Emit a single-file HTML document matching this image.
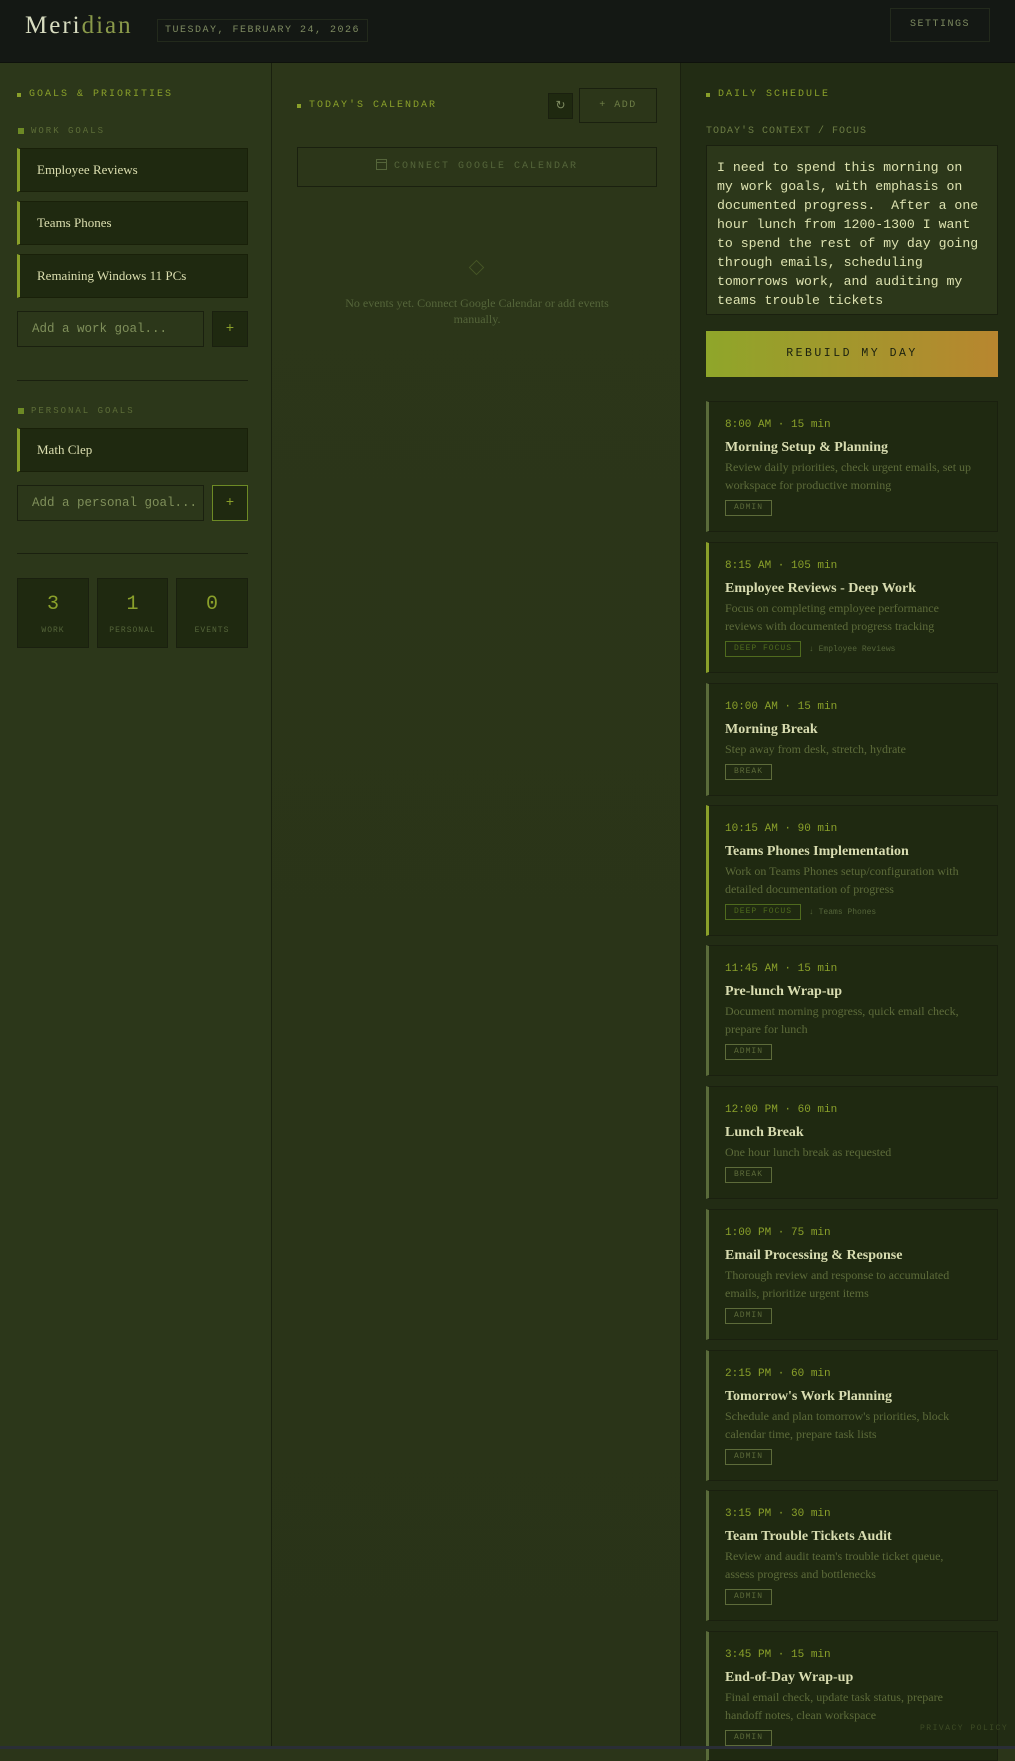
<!DOCTYPE html>
<html><head><meta charset="utf-8"><style>
*{box-sizing:border-box;margin:0;padding:0}
body{width:1015px;height:1749px;overflow:hidden;background:#2b3519;font-family:"Liberation Mono",monospace;position:relative}
.hdr{position:absolute;left:0;top:0;width:1015px;height:63px;background:#141814;border-bottom:1px solid #0e110c}
.logo{position:absolute;left:25px;top:12px;font:300 25px "Liberation Serif",serif;color:#d8dcc0;letter-spacing:2px}
.logo span{color:#8a9a4a}
.date{position:absolute;left:157px;top:19px;width:211px;height:23px;border:1px solid #232a1c;color:#7d8a60;font-size:10px;letter-spacing:1.5px;line-height:21px;text-align:center}
.set{position:absolute;left:890px;top:8px;width:100px;height:34px;border:1px solid #232a1c;color:#7d8a60;font-size:10px;letter-spacing:1.5px;line-height:32px;text-align:center}
.col{position:absolute;top:63px;bottom:0}
.c1{left:0;width:272px;background:#2c371a;border-right:1px solid #1a200f}
.c2{left:272px;width:409px;background:linear-gradient(#2c3619,#293318);border-right:1px solid #1a200f}
.c3{left:681px;width:334px;background:#222c14}
.lab{position:absolute;font-size:10px;letter-spacing:2px;color:#8aa02a;line-height:12px}
.lab:before{content:"";position:absolute;left:-12px;top:4px;width:4px;height:4px;background:#8aa02a}
.sub{position:absolute;font-size:9px;letter-spacing:2px;color:#5d6d38;line-height:10px}
.sub:before{content:"";position:absolute;left:-13px;top:2px;width:6px;height:6px;background:#6d8a25}
.goal{position:absolute;left:17px;width:231px;height:44px;background:#1f2910;border:1px solid #192009;border-left:3px solid #8aa02a;font:13px "Liberation Serif",serif;color:#dcdfb0;padding-left:17px;line-height:42px}
.inp{position:absolute;left:17px;width:187px;height:36px;border:1px solid #1a200f;background:#2c371a;color:#7f8f5a;font-size:12.5px;line-height:34px;padding-left:14px}
.btn{position:absolute;left:212px;width:36px;height:36px;border:1px solid #1a200f;background:#1f2910;color:#8aa02a;font-size:14px;text-align:center;line-height:34px}
.hr{position:absolute;left:17px;width:231px;height:1px;background:#1a200f}
.stat{position:absolute;top:578px;height:70px;background:#1f2910;border:1px solid #1a200f;text-align:center}
.stat b{display:block;font-weight:normal;font-size:20px;color:#8aa02a;margin-top:14px}
.stat i{display:block;font-style:normal;font-size:8px;letter-spacing:1px;color:#55653a;margin-top:10px}
.card{position:absolute;left:706px;width:292px;background:#1f2911;border:1px solid #1a200f;border-left:3px solid #5a6b3a;padding:16px 16px 15px 16px}
.card.df{border-left-color:#8aa02a}
.t{font-size:11px;color:#8aa02a;line-height:14px}
.n{font:bold 14px "Liberation Serif",serif;color:#d8dcb0;margin-top:6px;line-height:20px}
.d{font:12px "Liberation Serif",serif;color:#5d6b3a;line-height:18px;padding-right:8px}
.row{display:flex;align-items:center;margin-top:6px;height:16px}
.tag{border:1px solid #5d6b3a;color:#5d6b3a;font-size:8px;letter-spacing:1px;padding:0 8px;line-height:14px;height:16px}
.df .tag{border-color:#4f6a1e;color:#4f6a1e}
.lk{font-size:8px;color:#55653a;margin-left:8px}
</style></head><body>
<div class="hdr"><div class="logo">Meri<span>dian</span></div><div class="date">TUESDAY, FEBRUARY 24, 2026</div><div class="set">SETTINGS</div></div>
<div class="col c1"></div><div class="col c2"></div><div class="col c3"></div>

<div class="lab" style="left:29px;top:89px">GOALS &amp; PRIORITIES</div>
<div class="sub" style="left:31px;top:126px">WORK GOALS</div>
<div class="goal" style="top:148px">Employee Reviews</div>
<div class="goal" style="top:201px">Teams Phones</div>
<div class="goal" style="top:254px">Remaining Windows 11 PCs</div>
<div class="inp" style="top:311px">Add a work goal...</div>
<div class="btn" style="top:311px">+</div>
<div class="hr" style="top:380px"></div>
<div class="sub" style="left:31px;top:406px">PERSONAL GOALS</div>
<div class="goal" style="top:428px">Math Clep</div>
<div class="inp" style="top:485px">Add a personal goal...</div>
<div class="btn" style="top:485px;border-color:#6d8a25">+</div>
<div class="hr" style="top:553px"></div>
<div class="stat" style="left:17px;width:72px"><b>3</b><i>WORK</i></div>
<div class="stat" style="left:97px;width:71px"><b>1</b><i>PERSONAL</i></div>
<div class="stat" style="left:176px;width:72px"><b>0</b><i>EVENTS</i></div>

<div class="lab" style="left:309px;top:100px">TODAY'S CALENDAR</div>
<div class="btn" style="left:548px;top:93px;width:25px;height:26px;line-height:24px;font-size:12px;color:#7d8a60">&#x21bb;</div>
<div class="btn" style="left:579px;top:88px;width:78px;height:35px;background:transparent;font-size:10px;letter-spacing:1.5px;color:#6d7d45">+ ADD</div>
<div style="position:absolute;left:297px;top:147px;width:360px;height:40px;border:1px solid #1a200f;color:#55653a;font-size:10px;letter-spacing:2px;text-align:center;line-height:38px"><svg width="11" height="12" viewBox="0 0 11 12" style="vertical-align:-2px;margin-right:7px"><rect x="0.5" y="1.5" width="10" height="10" fill="none" stroke="#55653a"/><line x1="0.5" y1="4.5" x2="10.5" y2="4.5" stroke="#55653a"/></svg>CONNECT GOOGLE CALENDAR</div>
<div style="position:absolute;left:471px;top:262px;width:11px;height:11px;border:1px solid #465526;transform:rotate(45deg)"></div>
<div style="position:absolute;left:327px;top:295px;width:300px;text-align:center;font:12px 'Liberation Serif',serif;color:#55653a;line-height:16px">No events yet. Connect Google Calendar or add events manually.</div>

<div class="lab" style="left:718px;top:89px">DAILY SCHEDULE</div>
<div style="position:absolute;left:706px;top:126px;font-size:10px;letter-spacing:1px;color:#6d7d45">TODAY'S CONTEXT / FOCUS</div>
<div style="position:absolute;left:706px;top:145px;width:292px;height:170px;border:1px solid #1a200f;background:#2c371a;padding:12px 10px 0 10px;font-size:13.2px;line-height:19px;color:#dde2b0;white-space:pre-wrap">I need to spend this morning on
my work goals, with emphasis on
documented progress.  After a one
hour lunch from 1200-1300 I want
to spend the rest of my day going
through emails, scheduling
tomorrows work, and auditing my
teams trouble tickets</div>
<div style="position:absolute;left:706px;top:331px;width:292px;height:46px;background:linear-gradient(90deg,#8fa62a,#b8862f);color:#1a200f;font-size:11.5px;letter-spacing:2.5px;text-align:center;line-height:46px">REBUILD MY DAY</div>

<div class="card" style="top:401px"><div class="t">8:00 AM · 15 min</div><div class="n">Morning Setup &amp; Planning</div><div class="d">Review daily priorities, check urgent emails, set up workspace for productive morning</div><div class="row"><span class="tag">ADMIN</span></div></div>
<div class="card df" style="top:542px"><div class="t">8:15 AM · 105 min</div><div class="n">Employee Reviews - Deep Work</div><div class="d">Focus on completing employee performance reviews with documented progress tracking</div><div class="row"><span class="tag">DEEP FOCUS</span><span class="lk">↓ Employee Reviews</span></div></div>
<div class="card" style="top:683px"><div class="t">10:00 AM · 15 min</div><div class="n">Morning Break</div><div class="d">Step away from desk, stretch, hydrate</div><div class="row"><span class="tag">BREAK</span></div></div>
<div class="card df" style="top:805px"><div class="t">10:15 AM · 90 min</div><div class="n">Teams Phones Implementation</div><div class="d">Work on Teams Phones setup/configuration with detailed documentation of progress</div><div class="row"><span class="tag">DEEP FOCUS</span><span class="lk">↓ Teams Phones</span></div></div>
<div class="card" style="top:945px"><div class="t">11:45 AM · 15 min</div><div class="n">Pre-lunch Wrap-up</div><div class="d">Document morning progress, quick email check, prepare for lunch</div><div class="row"><span class="tag">ADMIN</span></div></div>
<div class="card" style="top:1086px"><div class="t">12:00 PM · 60 min</div><div class="n">Lunch Break</div><div class="d">One hour lunch break as requested</div><div class="row"><span class="tag">BREAK</span></div></div>
<div class="card" style="top:1209px"><div class="t">1:00 PM · 75 min</div><div class="n">Email Processing &amp; Response</div><div class="d">Thorough review and response to accumulated emails, prioritize urgent items</div><div class="row"><span class="tag">ADMIN</span></div></div>
<div class="card" style="top:1350px"><div class="t">2:15 PM · 60 min</div><div class="n">Tomorrow's Work Planning</div><div class="d">Schedule and plan tomorrow's priorities, block calendar time, prepare task lists</div><div class="row"><span class="tag">ADMIN</span></div></div>
<div class="card" style="top:1490px"><div class="t">3:15 PM · 30 min</div><div class="n">Team Trouble Tickets Audit</div><div class="d">Review and audit team's trouble ticket queue, assess progress and bottlenecks</div><div class="row"><span class="tag">ADMIN</span></div></div>
<div class="card" style="top:1631px;height:130px"><div class="t">3:45 PM · 15 min</div><div class="n">End-of-Day Wrap-up</div><div class="d">Final email check, update task status, prepare handoff notes, clean workspace</div><div class="row"><span class="tag">ADMIN</span></div></div>
<div style="position:absolute;left:920px;top:1724px;font-size:8px;letter-spacing:1.5px;color:#3e4b25">PRIVACY POLICY</div>
<div style="position:absolute;left:0;top:1746px;width:1015px;height:3px;background:#2a2e36"></div>
</body></html>
